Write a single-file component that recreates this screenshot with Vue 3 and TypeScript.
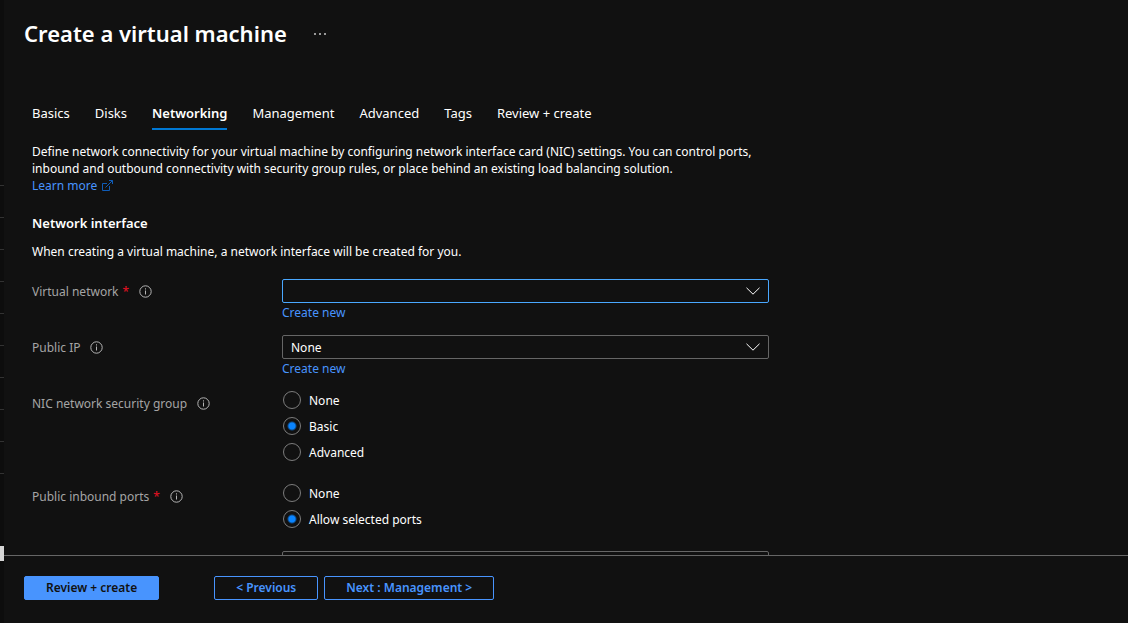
<script setup lang="ts">
import { ref } from 'vue'

interface Choice {
  value: string
  label: string
}

const tabs: string[] = ['Basics', 'Disks', 'Networking', 'Management', 'Advanced', 'Tags', 'Review + create']
const activeTab = ref('Networking')

const virtualNetwork = ref('')
const publicIp = ref('None')
const inboundPorts = ref('')

const securityGroups: Choice[] = [
  { value: 'none', label: 'None' },
  { value: 'basic', label: 'Basic' },
  { value: 'advanced', label: 'Advanced' },
]
const securityGroup = ref('basic')

const portOptions: Choice[] = [
  { value: 'none', label: 'None' },
  { value: 'allow', label: 'Allow selected ports' },
]
const portOption = ref('allow')
</script>

<template>
  <div class="shell">
    <aside class="rail" aria-hidden="true">
      <div class="rail-rows">
        <span v-for="n in 10" :key="n" class="rail-row"></span>
      </div>
      <div class="rail-thumb"></div>
    </aside>

    <main class="blade">
      <header class="title-bar">
        <h1>Create a virtual machine</h1>
        <button class="more" type="button" aria-label="More actions">
          <svg width="12" height="4" viewBox="0 0 12 4">
            <rect x="0" y="2" width="2" height="2" />
            <rect x="5" y="2" width="2" height="2" />
            <rect x="10" y="2" width="2" height="2" />
          </svg>
        </button>
      </header>

      <nav class="tabs">
        <button
          v-for="tab in tabs"
          :key="tab"
          type="button"
          class="tab"
          :class="{ active: tab === activeTab }"
          @click="activeTab = tab"
        >{{ tab }}</button>
      </nav>

      <section class="content">
        <p class="intro">
          Define network connectivity for your virtual machine by configuring network interface card (NIC) settings. You can control ports,
          inbound and outbound connectivity with security group rules, or place behind an existing load balancing solution.
        </p>
        <a class="link learn" href="#">Learn more
          <svg class="external" width="11" height="11" viewBox="0 0 11 11">
            <path d="M5 3.5H.5v7h7V6M3.500 7.500l7-7M7 .5h3.500V4" />
          </svg>
        </a>

        <h2>Network interface</h2>
        <p class="note">When creating a virtual machine, a network interface will be created for you.</p>

        <div class="field">
          <div class="caption">
            <label for="vnet">Virtual network</label><span class="required">*</span>
            <svg class="info" width="13" height="13" viewBox="0 0 13 13">
              <circle cx="6.5" cy="6.5" r="5.7" /><path d="M6.5 5.5v4M6.5 3.3v1.2" />
            </svg>
          </div>
          <div class="control">
            <div class="select-box focused">
              <select id="vnet" v-model="virtualNetwork"><option value=""></option></select>
              <svg class="chevron" width="14" height="8" viewBox="0 0 14 8"><path d="M.5 .8L7 7.2 13.5.8" /></svg>
            </div>
            <a class="link create" href="#">Create new</a>
          </div>
        </div>

        <div class="field">
          <div class="caption">
            <label for="pip">Public IP</label>
            <svg class="info" width="13" height="13" viewBox="0 0 13 13">
              <circle cx="6.5" cy="6.5" r="5.7" /><path d="M6.5 5.5v4M6.5 3.3v1.2" />
            </svg>
          </div>
          <div class="control">
            <div class="select-box">
              <select id="pip" v-model="publicIp"><option>None</option></select>
              <svg class="chevron" width="14" height="8" viewBox="0 0 14 8"><path d="M.5 .8L7 7.2 13.5.8" /></svg>
            </div>
            <a class="link create" href="#">Create new</a>
          </div>
        </div>

        <div class="field" role="radiogroup" aria-labelledby="nsg-caption">
          <div class="caption">
            <span id="nsg-caption">NIC network security group</span>
            <svg class="info" width="13" height="13" viewBox="0 0 13 13">
              <circle cx="6.5" cy="6.5" r="5.7" /><path d="M6.5 5.5v4M6.5 3.3v1.2" />
            </svg>
          </div>
          <div class="control radios">
            <label v-for="option in securityGroups" :key="option.value" class="radio">
              <input v-model="securityGroup" type="radio" name="nsg" :value="option.value" />{{ option.label }}
            </label>
          </div>
        </div>

        <div class="field" role="radiogroup" aria-labelledby="ports-caption">
          <div class="caption">
            <span id="ports-caption">Public inbound ports</span><span class="required">*</span>
            <svg class="info" width="13" height="13" viewBox="0 0 13 13">
              <circle cx="6.5" cy="6.5" r="5.7" /><path d="M6.5 5.5v4M6.5 3.3v1.2" />
            </svg>
          </div>
          <div class="control radios">
            <label v-for="option in portOptions" :key="option.value" class="radio">
              <input v-model="portOption" type="radio" name="ports" :value="option.value" />{{ option.label }}
            </label>
          </div>
        </div>

        <div class="field">
          <div class="caption"></div>
          <div class="control">
            <div class="select-box">
              <select v-model="inboundPorts" aria-label="Inbound ports"><option value=""></option></select>
            </div>
          </div>
        </div>
      </section>

      <footer class="actions">
        <button class="button primary" type="button">Review + create</button>
        <button class="button" type="button">&lt; Previous</button>
        <button class="button" type="button">Next : Management &gt;</button>
      </footer>
    </main>
  </div>
</template>

<style>
body {
  margin: 0;
  background: #111;
}
</style>

<style scoped>
.shell {
  display: flex;
  height: 100vh;
  overflow: hidden;
  background: #111;
  color: #fff;
  font-family: "Segoe UI", "Noto Sans", "Open Sans", sans-serif;
  font-size: 12px;
  line-height: 17px;
}
.rail {
  display: flex;
  flex-direction: column;
  width: 4px;
  padding-top: 154px;
  box-sizing: border-box;
  background: #0d0d0d;
}
.rail-rows {
  height: 392px;
}
.rail-row {
  display: block;
  height: 32px;
  box-sizing: border-box;
  border-bottom: 1px solid #323232;
}
.rail-thumb {
  height: 15px;
  background: #d6d6d6;
}
.blade {
  display: flex;
  flex: 1;
  flex-direction: column;
  min-width: 0;
}
.title-bar {
  display: flex;
  align-items: center;
  flex: none;
  gap: 27px;
  height: 66px;
  padding-left: 20px;
}
h1 {
  margin: 0;
  font-size: 22px;
  font-weight: 600;
  line-height: 28px;
}
button {
  font: inherit;
  cursor: pointer;
}
.more {
  display: flex;
  padding: 0;
  border: 0;
  background: none;
  fill: #999;
}
.tabs {
  display: flex;
  flex: none;
  gap: 25px;
  padding: 34px 28px 0;
}
.tab {
  padding: 5px 0 6px;
  border: 0;
  border-bottom: 2px solid transparent;
  background: none;
  color: #fff;
  font-size: 13px;
}
.tab.active {
  border-color: #0078d4;
  font-weight: 600;
}
.content {
  flex: 1;
  min-height: 0;
  max-width: 737px;
  padding: 13px 28px 0;
  overflow: hidden;
}
p,
h2 {
  margin: 0;
}
.link {
  color: #4894fe;
  text-decoration: none;
}
.learn {
  display: flex;
  align-items: center;
  gap: 5px;
}
.create {
  display: block;
  margin-top: 1px;
}
.external {
  fill: none;
  stroke: #0f5cb8;
}
h2 {
  margin-top: 21px;
  font-size: 13px;
  font-weight: 600;
}
.note {
  margin: 11px 0 19px;
}
.field {
  display: flex;
}
.caption {
  display: flex;
  align-items: center;
  flex: none;
  width: 250px;
  height: 24px;
  color: #a5a5a5;
}
.required {
  margin-left: 4px;
  color: #e81123;
}
.info {
  margin-left: 10px;
  fill: none;
  stroke: #b5b5b5;
}
.control {
  flex: 1;
  min-width: 0;
  height: 56px;
}
.select-box {
  display: grid;
  align-items: center;
}
.select-box > * {
  grid-area: 1 / 1;
}
select {
  width: 100%;
  height: 24px;
  padding: 0 8px;
  appearance: none;
  border: 1px solid #666;
  border-radius: 2px;
  outline: 0;
  background: #111;
  color: #fff;
  font: inherit;
}
.focused select {
  border-color: #4aa8ff;
}
.chevron {
  justify-self: end;
  margin-right: 9px;
  fill: none;
  stroke: #fff;
  pointer-events: none;
}
.radios {
  display: flex;
  flex-direction: column;
  gap: 8px;
  height: auto;
  padding-bottom: 23px;
}
.radio {
  display: flex;
  align-items: center;
  gap: 8px;
  height: 18px;
}
.radio input {
  width: 18px;
  height: 18px;
  margin: 0 0 0 1px;
  appearance: none;
  border: 1px solid #7c7c7c;
  border-radius: 50%;
}
.radio input:checked {
  background: radial-gradient(circle, #0a84ff 3px, transparent 5px);
}
.actions {
  display: flex;
  align-items: flex-start;
  flex: none;
  height: 68px;
  padding: 20px 20px 0;
  box-sizing: border-box;
  border-top: 1px solid #666;
}
.button {
  height: 24px;
  margin-right: 6px;
  padding: 0 21px;
  border: 1px solid #4894fe;
  border-radius: 2px;
  background: none;
  color: #4894fe;
  font-weight: 600;
  line-height: 20px;
}
.primary {
  margin-right: 55px;
  background: #4894fe;
  color: #111;
}
</style>
